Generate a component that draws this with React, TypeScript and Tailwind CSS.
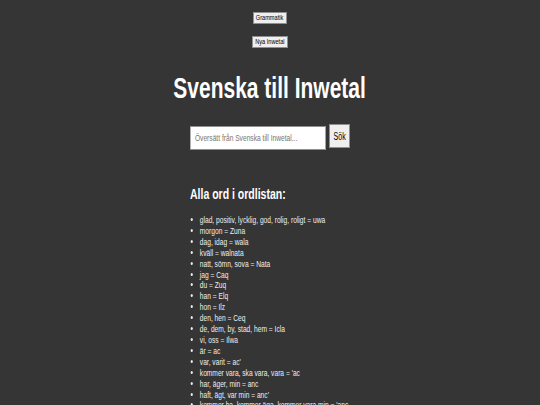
const words = [
  "glad, positiv, lycklig, god, rolig, roligt = uwa",
  "morgon = Zuna",
  "dag, idag = wala",
  "kväll = walnata",
  "natt, sömn, sova = Nata",
  "jag = Caq",
  "du = Zuq",
  "han = Elq",
  "hon = Ilz",
  "den, hen = Ceq",
  "de, dem, by, stad, hem = Icla",
  "vi, oss = Ilwa",
  "är = ac",
  "var, varit = ac'",
  "kommer vara, ska vara, vara = 'ac",
  "har, äger, min = anc",
  "haft, ägt, var min = anc'",
  "kommer ha, kommer äga, kommer vara min = 'anc",
];

// the page reads narrow: every text is drawn at 70% of its width
const Narrow = ({ children }: { children: React.ReactNode }) => (
  <span className="inline-block shrink-0 whitespace-nowrap scale-x-[0.7]">{children}</span>
);

const App = () => {
  return (
    <div
      className="min-h-[405px] overflow-hidden bg-[#353535] text-white"
      style={{ fontFamily: '"Liberation Sans", Arial, sans-serif' }}
    >
      {/* Nav buttons */}
      <div className="flex flex-col items-center pt-[12px]">
        <button className="w-[34px] h-[12px] flex items-center justify-center bg-[#efefef] border border-[#8f8f8f] text-black text-[8px] leading-none">
          <Narrow>Grammatik</Narrow>
        </button>
        <button className="mt-[12px] w-[36px] h-[12px] flex items-center justify-center bg-[#efefef] border border-[#8f8f8f] text-black text-[8px] leading-none">
          <Narrow>Nya Inwetal</Narrow>
        </button>
      </div>

      <h1 className="mt-[22px] flex justify-center text-[30px] font-bold leading-[36px]">
        <Narrow>Svenska till Inwetal</Narrow>
      </h1>

      <div className="w-[160px] mx-auto">
        {/* Search */}
        <div className="mt-[18px] flex gap-[3px]">
          <div className="w-[136px] h-[24px] shrink-0">
            <input
              className="w-[194px] h-[24px] origin-left scale-x-[0.7] bg-white border border-[#8f8f8f] px-[6px] text-[9.5px] text-black placeholder:text-[#757575] outline-none"
              placeholder="Översätt från Svenska till Inwetal..."
            />
          </div>
          <button className="w-[21px] h-[24px] shrink-0 flex items-center justify-center bg-[#efefef] border border-[#8f8f8f] text-black text-[10px]">
            <Narrow>Sök</Narrow>
          </button>
        </div>

        <h2 className="mt-[37px] text-[15px] font-bold leading-[18px]">
          <span className="inline-block whitespace-nowrap origin-left scale-x-[0.7]">Alla ord i ordlistan:</span>
        </h2>

        <ul className="mt-[12px] w-[229px] origin-left scale-x-[0.7] list-disc pl-[14px] text-[9.5px] leading-[10.9px] text-[#eeeeee] whitespace-nowrap">
          {words.map((w) => (
            <li key={w}>{w}</li>
          ))}
        </ul>
      </div>
    </div>
  );
};

export default App;
